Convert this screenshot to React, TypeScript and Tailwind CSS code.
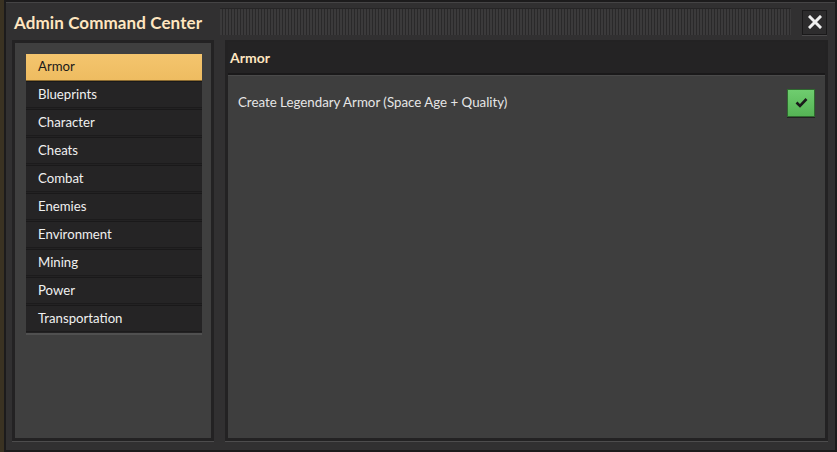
import { useState } from "react";

const categories=["Armor","Blueprints","Character","Cheats","Combat","Enemies","Environment","Mining","Power","Transportation"];

const font={fontFamily:"Lato, 'Noto Sans', sans-serif"};

const App=()=>{
  const [selected,setSelected]=useState("Armor");

  return (
    <div className="w-[837px] h-[452px] bg-[#3a3222] flex overflow-hidden" style={font}>
      <div className="ml-[4px] flex-1 flex flex-col bg-[#313031] border-2 border-[#1c1b1c] shadow-[inset_0_1px_0_#454445]">
        {/* title bar */}
        <div className="flex items-center h-[37px] pt-[4px] pl-[8px] pr-[8px]">
          <h1 className="text-[17px] font-bold text-[#ffe6c0] leading-none tracking-[0.1px]">Admin Command Center</h1>
          <div className="flex-1 h-[27px] -mt-[2px] ml-[18px] mr-[11px] bg-[repeating-linear-gradient(90deg,#3b3a3b_0px,#3b3a3b_2px,#2a292a_2px,#2a292a_3px)] border-t border-[#262526]"></div>
          <button className="w-[25px] h-[25px] -mt-[1px] bg-[#2d2c2d] border border-[#1a191a] shadow-[0_1px_0_#4a494a] flex items-center justify-center cursor-pointer">
            <svg width="14" height="14" viewBox="0 0 14 14">
              <path d="M2 2 L12 12 M12 2 L2 12" stroke="#f0f0f0" strokeWidth="3" strokeLinecap="square"/>
            </svg>
          </button>
        </div>

        {/* body */}
        <div className="flex gap-[11px] pl-[6px] pr-[7px] mt-[1px] h-[401px]">
          <div className="w-[202px] border-[3px] border-[#232223] bg-[#3f3f3f] shadow-[0_1px_0_#4d4c4d] pl-[11px] pr-[9px] pt-[11px]">
            <div className="flex flex-col bg-[#232223] shadow-[0_2px_0_#505050]">
              {categories.map((c,i)=>(
                <button key={c} onClick={()=>setSelected(c)}
                  className={(i===0?"h-[26px] ":"h-[27px] ")+(c===selected
                    ? "mb-[1px] text-left pl-[12px] text-[13.2px] text-[#1a1a1a] bg-[linear-gradient(#f4c56e,#eebc61)] shadow-[0_1px_0_#8a6a30]"
                    : "mb-[1px] text-left pl-[12px] text-[13.2px] text-[#f0f0f0] bg-[#252425] border-t border-[#1a191a] shadow-[inset_0_-1px_0_#1c1b1c]")}>
                  {c}
                </button>
              ))}
            </div>
          </div>

          <div className="flex-1 flex flex-col border-[3px] border-t-[2px] border-[#232223] bg-[#3e3e3e] shadow-[0_1px_0_#4d4c4d]">
            <div className="h-[33px] flex items-center pl-[2px] pb-[1px] bg-[#242324] border-b-2 border-[#1a191a]">
              <span className="text-[14px] font-bold text-[#ffe6c0]">{selected}</span>
            </div>
            <div className="flex-1 pl-[10px] pr-[10px] pt-[14px] shadow-[inset_0_1px_0_#4a4a4a]">
              {selected==="Armor" && (
                <div className="flex items-center justify-between h-[28px]">
                  <span className="text-[13.3px] text-[#e6e6e6]">Create Legendary Armor (Space Age + Quality)</span>
                  <button className="w-[28px] h-[28px] -mt-[1px] bg-[linear-gradient(#6fcd6f,#55b455)] border border-[#2f6a2f] shadow-[0_1px_0_#222] flex items-center justify-center cursor-pointer">
                    <svg width="13" height="11" viewBox="0 0 13 11">
                      <path d="M1.5 5.5 L5 9 L11.5 2" stroke="#1a1a1a" strokeWidth="2.6" fill="none"/>
                    </svg>
                  </button>
                </div>
              )}
            </div>
          </div>
        </div>
      </div>
    </div>
  )
}

export default App
